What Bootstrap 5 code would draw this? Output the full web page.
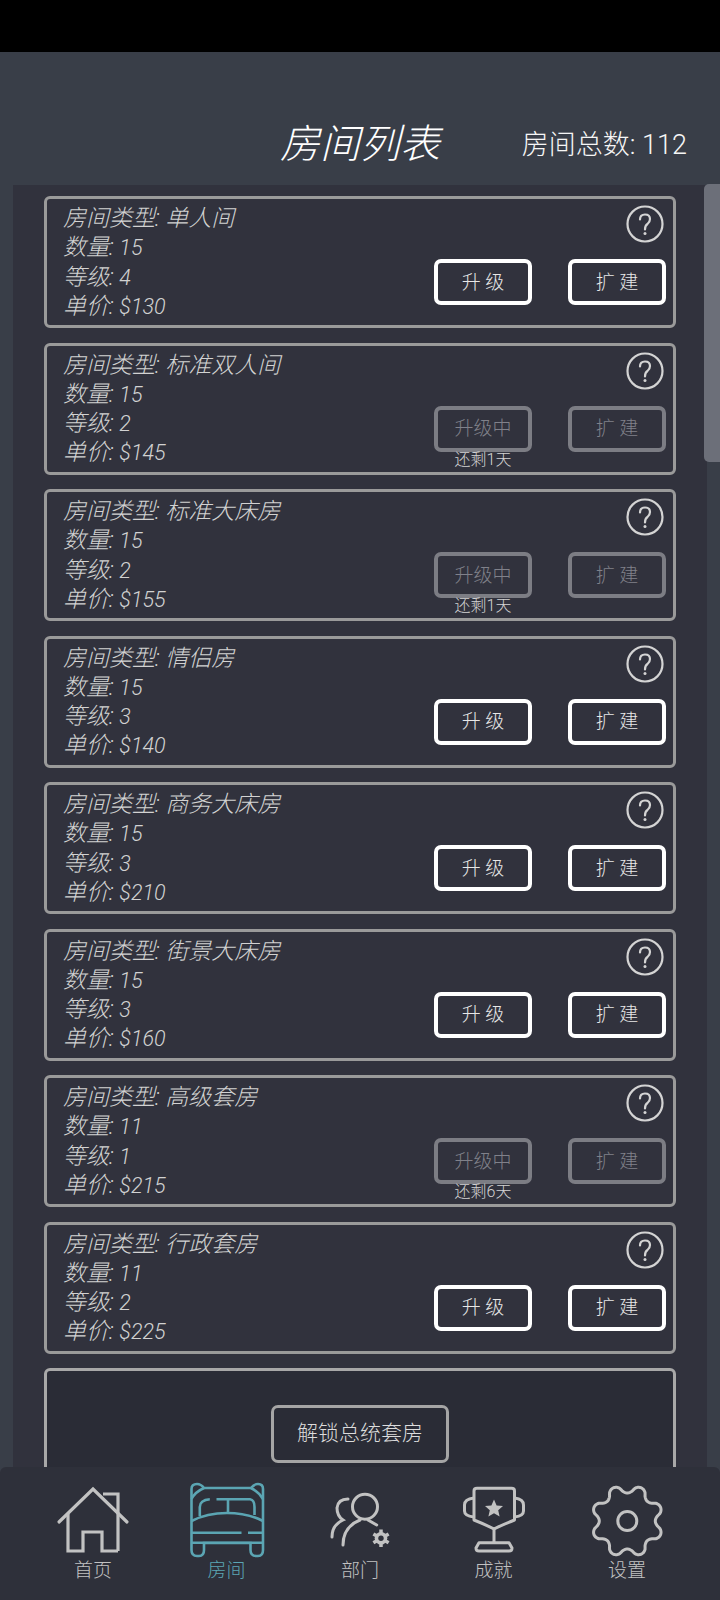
<!DOCTYPE html>
<html lang="zh">
<head>
<meta charset="UTF-8" />
<meta name="viewport" content="width=device-width, initial-scale=1" />
<title>房间列表</title>
<link href="https://cdn.jsdelivr.net/npm/bootstrap@5.3.0/dist/css/bootstrap.min.css" rel="stylesheet" />
<style>
html, body { height: 1600px; overflow: hidden; background: #393e48; }
body { font-family: "Roboto", "Noto Sans CJK SC", sans-serif; color: #ddd; }
.screen { width: 720px; height: 1600px; }
.statusbar { height: 52px; background: #000; }
.page-head { height: 133px; background: #393e48; }
.page-title { font-size: 40px; line-height: 48px; font-style: italic; font-weight: 300; color: #fff; width: 720px; text-align: center; top: 69px; }
.room-total { font-size: 27px; line-height: 36px; font-weight: 300; color: #f6f6f6; right: 33px; top: 75px; }
.list-panel { background: #31323d; margin-left: 13px; margin-right: 13px; height: 1415px; padding: 11px 31px 0 31px; }
.scroll-track { width: 16px; right: 0; top: 184px; height: 1416px; }
.scroll-thumb { width: 16px; height: 278px; background: #6c6f79; border-radius: 5px 0 0 5px; }
.room-card { height: 132px; margin-bottom: 14.500px; border: 3px solid #9a9a9a; border-radius: 6px; padding: 5px 0 0 16px; }
.room-line { font-size: 23px; line-height: 29.300px; font-style: italic; font-weight: 300; color: #d2d2d2; }
.room-val { font-size: 21.500px; }
.help-mark { top: 6px; right: 9px; width: 38px; height: 38px; }
.room-btn { width: 98px; height: 46px; border: 4px solid #fff; border-radius: 7px; font-size: 19px; font-weight: 300; color: #e8e8e8; background: transparent; padding: 0; line-height: 1; }
.room-btn.is-off { border-color: #7c7d84; color: #80818a; }
.btn-slot { left: 387px; top: 60px; width: 98px; }
.btn-slot2 { left: 521px; }
.days-left { font-size: 16px; line-height: 18px; font-weight: 300; color: #d4d4d4; text-align: center; margin-top: -1px; }
.unlock-card { height: 300px; border: 3px solid #a8a8a8; border-radius: 6px; background: #2a2c36; }
.unlock-btn { left: 224px; top: 34px; width: 178px; height: 58px; border: 3.500px solid #a5a5a5; border-radius: 7px; font-size: 21px; font-weight: 300; color: #dcdcdc; background: transparent; padding: 0; }
.tab-bar { left: 0; bottom: 0; width: 720px; height: 133px; background: #2e303a; border-radius: 6px 6px 0 0; padding-top: 13px; }
.tab-item { width: 133.500px; color: #c2c2c2; font-size: 19px; font-weight: 300; line-height: 26px; }
.tab-item svg { display: block; height: 80px; width: 100px; }
.tab-item.is-active { color: #5ba5b3; }
.tab-label { margin-top: -2px; }
</style>
</head>
<body>
<div class="screen position-relative overflow-hidden">
  <div class="statusbar"></div>
  <div class="page-head position-relative">
    <div class="page-title position-absolute">房间列表</div>
    <div class="room-total position-absolute">房间总数: 112</div>
  </div>
  <div class="list-panel overflow-hidden" id="roomList"></div>

  <div class="scroll-track position-absolute"><div class="scroll-thumb"></div></div>

  <div class="tab-bar position-absolute d-flex justify-content-center">
    <div class="tab-item d-flex flex-column align-items-center">
      <svg viewBox="0 0 100 80" fill="none" stroke="currentColor" stroke-width="3.200">
        <path d="M16 42 L50 9 L84 42" stroke-linecap="round"/>
        <path d="M60 14 H75 V71"/>
        <path d="M25 34 V71 H40 V52 H59 V71 H75"/>
      </svg>
      <div class="tab-label">首页</div>
    </div>
    <div class="tab-item is-active d-flex flex-column align-items-center">
      <svg viewBox="0 0 100 80" fill="none" stroke="currentColor" stroke-width="2.600">
        <path d="M14.500 16 V70 Q14.500 76 20 76 H22 Q27 76 27 70 V63 H73.500 V70 Q73.500 76 79 76 H81 Q86 76 86 70 V16"/>
        <path d="M14.500 16 V9 Q14.500 4 20 4 Q24 4 27 8 H74 Q77 4 81 4 Q86 4 86 9 V16"/>
        <path d="M14.500 19 Q18 12 27 8 M86 19 Q82 12 74 8"/>
        <path d="M22.800 36 V27 Q23 20 32.800 19.300 M39.500 19.300 H73 Q77.500 20 77.500 27 V35 M51 19.300 V33"/>
        <path d="M14.500 41 Q30 33 50 33 Q70 33 86 41"/>
        <path d="M14.500 52.700 H64.500 M71 52.700 H86 M14.500 62.700 H86"/>
      </svg>
      <div class="tab-label">房间</div>
    </div>
    <div class="tab-item d-flex flex-column align-items-center">
      <svg viewBox="0 0 100 80" fill="none" stroke="currentColor" stroke-width="3" stroke-linecap="round">
        <circle cx="55" cy="26.700" r="12.500"/>
        <path d="M33 65 Q33 47 50 40 M58 40 L66.700 45"/>
        <path d="M38 19 Q28 19 27 28 Q27 36 33 40 Q22 45 22 57"/>
        <g stroke-width="3.500" stroke-linecap="butt">
          <path d="M71 49.500 V67.100 M63.400 53.900 L78.600 62.700 M63.400 62.700 L78.600 53.900"/>
        </g>
        <circle cx="71" cy="58.300" r="6.300" fill="currentColor" stroke="none"/>
        <circle cx="71" cy="58.300" r="2.700" fill="#2e303a" stroke="none"/>
      </svg>
      <div class="tab-label">部门</div>
    </div>
    <div class="tab-item d-flex flex-column align-items-center">
      <svg viewBox="0 0 100 80" fill="none" stroke="currentColor" stroke-width="3" stroke-linejoin="round">
        <path d="M30 11 Q30 8.300 33 8.300 H67.500 Q70.500 8.300 70.500 11 V40 Q60 44 50 49 Q40 44 30 40 Z"/>
        <path d="M30 18 Q20.500 19 20.500 25 V31 Q20.500 36 30 37 M70.500 18 Q79.500 19 79.500 25 V31 Q79.500 36 70.500 37"/>
        <path d="M50 49 V62"/>
        <path d="M35 62.700 H65 L68 68 Q68 71 65 71 H35 Q32 71 32 68 Z"/>
        <path fill="currentColor" stroke="none" d="M50 19.500 L52.600 25.400 L59 26 L54.200 30.300 L55.600 36.600 L50 33.300 L44.400 36.600 L45.800 30.300 L41 26 L47.400 25.400 Z"/>
      </svg>
      <div class="tab-label">成就</div>
    </div>
    <div class="tab-item d-flex flex-column align-items-center">
      <svg viewBox="0 0 100 80" fill="none" stroke="currentColor" stroke-width="3" stroke-linejoin="round">
        <circle cx="50.300" cy="41" r="9.500"/>
        <path id="gearOutline"/>
      </svg>
      <div class="tab-label">设置</div>
    </div>
  </div>
</div>

<script>
const rooms = [
  { type: '单人间', qty: 15, level: 4, price: 130 },
  { type: '标准双人间', qty: 15, level: 2, price: 145, left: 1 },
  { type: '标准大床房', qty: 15, level: 2, price: 155, left: 1 },
  { type: '情侣房', qty: 15, level: 3, price: 140 },
  { type: '商务大床房', qty: 15, level: 3, price: 210 },
  { type: '街景大床房', qty: 15, level: 3, price: 160 },
  { type: '高级套房', qty: 11, level: 1, price: 215, left: 6 },
  { type: '行政套房', qty: 11, level: 2, price: 225 }
];

const helpIcon = `<svg class="help-mark position-absolute" viewBox="0 0 38 38" fill="none" stroke="#d4d4d4" stroke-width="2.200">
  <circle cx="19" cy="19" r="17.500"/>
  <path d="M14 14.500 Q14 9.500 19 9.500 Q24 9.500 24 14 Q24 17 21.500 19 Q19 20.500 19 24.500" stroke-linecap="round"/>
  <circle cx="19" cy="28.500" r="1.500" fill="#d4d4d4" stroke="none"/>
</svg>`;

const list = document.getElementById('roomList');
list.innerHTML = rooms.map(r => {
  const busy = r.left !== undefined;
  return `
  <div class="room-card position-relative">
    <div class="room-line">房间类型: ${r.type}</div>
    <div class="room-line">数量: <span class="room-val">${r.qty}</span></div>
    <div class="room-line">等级: <span class="room-val">${r.level}</span></div>
    <div class="room-line">单价: <span class="room-val">$${r.price}</span></div>
    ${helpIcon}
    <div class="btn-slot position-absolute">
      <button class="btn room-btn ${busy ? 'is-off' : ''}">${busy ? '升级中' : '升 级'}</button>
      ${busy ? `<div class="days-left">还剩${r.left}天</div>` : ''}
    </div>
    <div class="btn-slot btn-slot2 position-absolute">
      <button class="btn room-btn ${busy ? 'is-off' : ''}">扩 建</button>
    </div>
  </div>`;
}).join('') + `
  <div class="unlock-card position-relative">
    <button class="btn unlock-btn position-absolute">解锁总统套房</button>
  </div>`;

// gear outline: 8 teeth with flat-ish tops, a dip at the top
const gearPts = [];
for (let i = 0; i < 192; i++) {
  const a = i / 192 * Math.PI * 2;
  const c = Math.cos(8 * a);
  const rad = 32 - 4 * Math.sign(c) * Math.pow(Math.abs(c), 0.7);
  gearPts.push((50.3 + rad * Math.sin(a)).toFixed(2) + ' ' + (41 - rad * Math.cos(a)).toFixed(2));
}
document.getElementById('gearOutline').setAttribute('d', 'M' + gearPts.join(' L') + ' Z');
</script>
<script src="https://cdn.jsdelivr.net/npm/bootstrap@5.3.0/dist/js/bootstrap.bundle.min.js"></script>
</body>
</html>
